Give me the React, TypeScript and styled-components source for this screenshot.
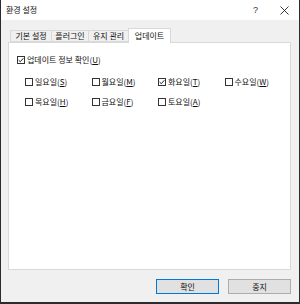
import styled, {createGlobalStyle} from 'styled-components';

const GlobalStyle = createGlobalStyle`
  html, body {
    margin: 0;
    padding: 0;
    background: #fff;
  }
  body {
    font-family: "Noto Sans CJK KR", "Noto Sans", sans-serif;
  }
`;

const Window = styled.div`
  width: 300px;
  height: 304px;
  box-sizing: border-box;
  display: flex;
  flex-direction: column;
  background: #f0f0f0;
  border: 1px solid #2b2b2b;
  border-top: none;
  border-bottom-width: 2px;
  font-size: 8px;
  color: #111;
`;

const TitleBar = styled.div`
  flex: none;
  height: 20px;
  display: flex;
  align-items: center;
  padding-left: 5px;
  background: #fff;
`;

const Title = styled.span`
  line-height: 12px;
`;

const TitleButtons = styled.div`
  margin-left: auto;
  display: flex;
  height: 100%;
`;

const TitleButton = styled.div`
  width: 29px;
  height: 100%;
  display: flex;
  align-items: center;
  justify-content: center;
  font-family: "Liberation Sans", sans-serif;
  font-size: 9px;
  color: #333;
`;

const Body = styled.div`
  flex: 1;
  min-height: 0;
  display: flex;
  flex-direction: column;
  padding: 8px 8px 0 7px;
`;

const TabStrip = styled.div`
  flex: none;
  height: 14px;
  display: flex;
  align-items: flex-end;
  padding-left: 2px;
`;

const Tab = styled.div<{$active?: boolean; $w: number}>`
  box-sizing: border-box;
  width: ${p => p.$w}px;
  height: ${p => (p.$active ? '15px' : '12px')};
  margin-bottom: ${p => (p.$active ? '-1px' : '0')};
  margin-left: -1px;
  position: relative;
  z-index: ${p => (p.$active ? 1 : 0)};
  display: flex;
  align-items: center;
  justify-content: center;
  background: ${p => (p.$active ? '#fff' : '#f0f0f0')};
  border: 1px solid #d9d9d9;
  border-bottom: ${p => (p.$active ? 'none' : '1px solid #d9d9d9')};
  line-height: 10px;
  white-space: nowrap;
  &:first-child {
    margin-left: 0;
  }
`;

const Panel = styled.div`
  flex: 1;
  min-height: 0;
  box-sizing: border-box;
  background: #fff;
  border: 1px solid #d9d9d9;
  padding: 11px 8px;
`;

const CheckRow = styled.label`
  display: flex;
  align-items: center;
  gap: 2px;
  height: 12px;
  line-height: 12px;
  white-space: nowrap;
`;

const Box = styled.span`
  flex: none;
  box-sizing: border-box;
  width: 8px;
  height: 8px;
  border: 1px solid #333;
  background: #fff;
  display: flex;
  align-items: center;
  justify-content: center;
`;

const DayGrid = styled.div`
  margin-top: 10px;
  padding-left: 8px;
  display: grid;
  grid-template-columns: repeat(4, 66.5px);
  row-gap: 8px;
`;

const Footer = styled.div`
  flex: none;
  height: 32px;
  box-sizing: border-box;
  display: flex;
  justify-content: flex-end;
  gap: 9px;
  padding: 9px 0 8px 0;
`;

const Button = styled.button<{$primary?: boolean}>`
  width: 63px;
  height: 15px;
  box-sizing: border-box;
  padding: 0;
  margin: 0;
  background: #e1e1e1;
  border: 1px solid ${p => (p.$primary ? '#0078d7' : '#adadad')};
  font-family: "Noto Sans CJK KR", "Noto Sans", sans-serif;
  font-size: 8px;
  line-height: 12px;
  color: #111;
`;

function Check({label, mnemonic, checked}: {label: string; mnemonic: string; checked?: boolean}) {
  return (
    <CheckRow>
      <Box>
        {checked && (
          <svg width="6" height="6" viewBox="0 0 6 6">
            <path d="M0.6 3.1 L2.3 4.7 L5.4 1.2" fill="none" stroke="#222" strokeWidth="1" />
          </svg>
        )}
      </Box>
      <span>
        {label}(<u>{mnemonic}</u>)
      </span>
    </CheckRow>
  );
}

const TABS = [
  {label: '기본 설정', w: 42},
  {label: '플러그인', w: 38},
  {label: '유지 관리', w: 41},
  {label: '업데이트', w: 43, active: true},
];

const DAYS = [
  {label: '일요일', key: 'S'},
  {label: '월요일', key: 'M'},
  {label: '화요일', key: 'T', checked: true},
  {label: '수요일', key: 'W'},
  {label: '목요일', key: 'H'},
  {label: '금요일', key: 'F'},
  {label: '토요일', key: 'A'},
];

export default function App() {
  return (
    <>
      <GlobalStyle />
      <Window>
        <TitleBar>
          <Title>환경 설정</Title>
          <TitleButtons>
            <TitleButton>?</TitleButton>
            <TitleButton>
              <svg width="9" height="9" viewBox="0 0 9 9">
                <path d="M0.5 0.5 L8.5 8.5 M8.5 0.5 L0.5 8.5" stroke="#222" strokeWidth="0.9" />
              </svg>
            </TitleButton>
          </TitleButtons>
        </TitleBar>
        <Body>
          <TabStrip>
            {TABS.map(t => (
              <Tab key={t.label} $w={t.w} $active={t.active}>
                {t.label}
              </Tab>
            ))}
          </TabStrip>
          <Panel>
            <Check label="업데이트 정보 확인" mnemonic="U" checked />
            <DayGrid>
              {DAYS.map(d => (
                <Check key={d.key} label={d.label} mnemonic={d.key} checked={d.checked} />
              ))}
            </DayGrid>
          </Panel>
          <Footer>
            <Button $primary>확인</Button>
            <Button>중지</Button>
          </Footer>
        </Body>
      </Window>
    </>
  );
}
